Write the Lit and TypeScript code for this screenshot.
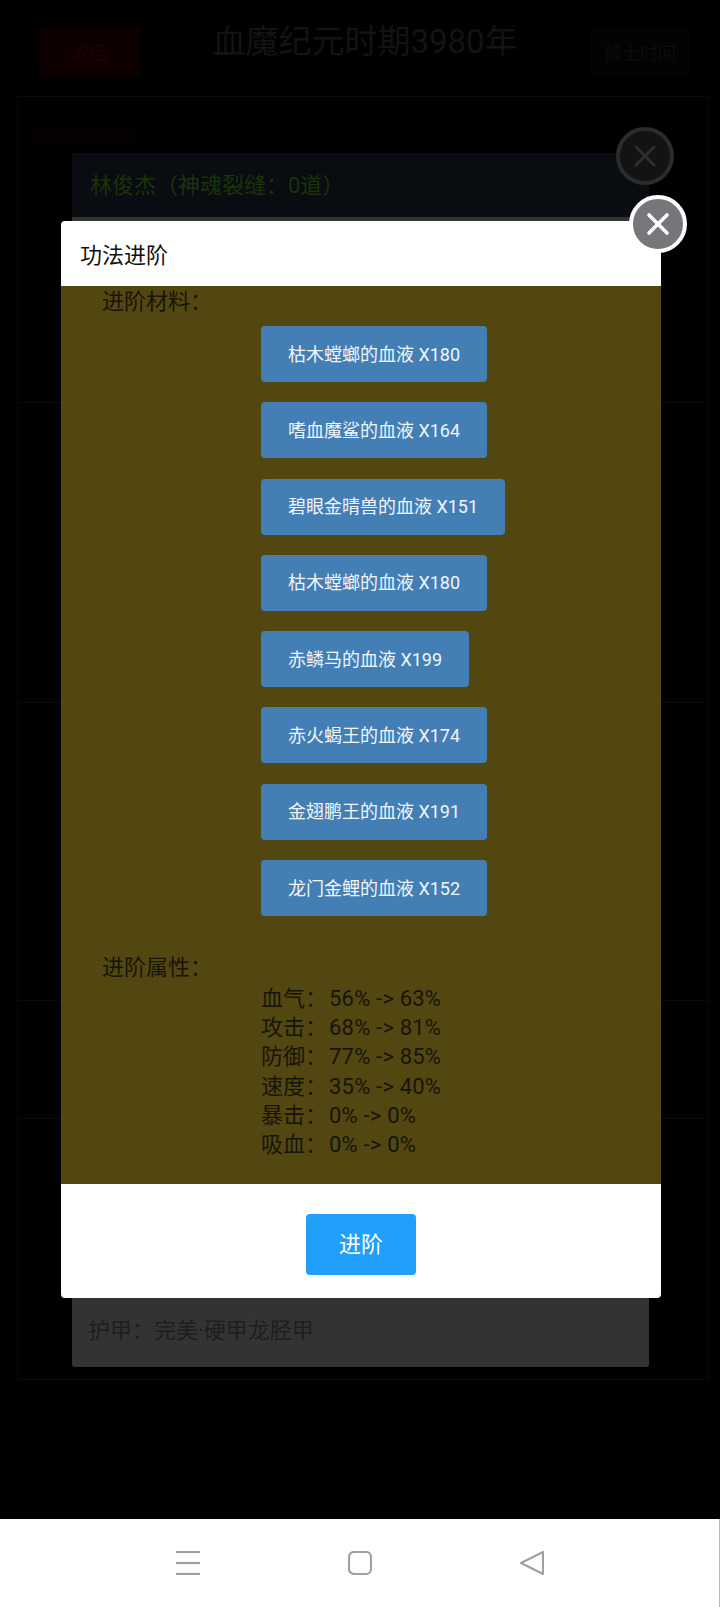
import { LitElement, html, css, svg } from "lit";
import { customElement } from "lit/decorators.js";

const FONT = css`"Roboto", "Noto Sans CJK SC", sans-serif`;

const materials = [
  "枯木螳螂的血液 X180",
  "嗜血魔鲨的血液 X164",
  "碧眼金晴兽的血液 X151",
  "枯木螳螂的血液 X180",
  "赤鳞马的血液 X199",
  "赤火蝎王的血液 X174",
  "金翅鹏王的血液 X191",
  "龙门金鲤的血液 X152",
];

const stats = [
  ["血气", "56% -> 63%"],
  ["攻击", "68% -> 81%"],
  ["防御", "77% -> 85%"],
  ["速度", "35% -> 40%"],
  ["暴击", "0% -> 0%"],
  ["吸血", "0% -> 0%"],
];

const closeIcon = svg`<line x1="-9" y1="-9" x2="9" y2="9"></line><line x1="9" y1="-9" x2="-9" y2="9"></line>`;

@customElement("app-root")
export class AppRoot extends LitElement {
  static styles = css`
    :host {
      display: flex;
      flex-direction: column;
      position: relative;
      width: 720px;
      height: 1607px;
      background: #000;
      overflow: hidden;
      font-family: ${FONT};
      font-size: 22px;
      color: #111;
    }
    .page { flex: 1; min-height: 0; display: flex; flex-direction: column; padding: 27px 30px 0 40px; }
    .top { display: flex; justify-content: space-between; align-items: flex-start; height: 69px; flex: none; }
    .top-btn { width: 100px; height: 50px; border-radius: 3px; display: flex; align-items: center; justify-content: center; font-size: 18px; }
    .top-btn.red { background: #0f0000; color: #1c0303; }
    .top-btn.dark { background: #030306; color: #0c0c0c; }
    .top-title { font-size: 33px; line-height: 30px; color: #131313; }
    .panel { margin: 0 -19px 0 -23px; height: 1284px; box-sizing: border-box; border: 1px solid #090909; display: flex; flex-direction: column; }
    .section { flex: none; box-sizing: border-box; border-bottom: 1px solid #0a0a0a; padding: 0 59px 0 54px; display: flex; flex-direction: column; }
    .s1 { height: 306px; padding-top: 30px; }
    .s2 { height: 300px; }
    .s3 { height: 298px; }
    .s4 { height: 118px; }
    .s5 { flex: 1; min-height: 0; border-bottom: 0; padding-bottom: 12px; }
    .hint { width: 100px; height: 16px; margin: 0 0 10px -39px; background: #060101; }
    .card { height: 64px; flex: none; box-sizing: border-box; padding: 0 18px 4px; display: flex; align-items: center; background: #090c11; color: #1a3309; }
    .fill { flex: 1; min-height: 0; }
    .fill-gray { background: #333; }
    .armor { flex: 1; min-height: 0; display: flex; align-items: flex-end; padding: 0 16px 23px; background: #333; color: #1e1e1e; border-radius: 0 0 3px 3px; line-height: 26px; margin-top: 20px; }
    .dim-close { position: absolute; left: 616px; top: 127px; width: 58px; height: 58px; }
    .dim-close circle { fill: #131313; stroke: #2c2c2c; stroke-width: 4; }
    .dim-close line { stroke: #2e2e2e; stroke-width: 3; stroke-linecap: round; }
    .modal { position: absolute; left: 61px; top: 221px; width: 600px; height: 1077px; background: #fff; border-radius: 4px; display: flex; flex-direction: column; }
    .modal-head { height: 65px; flex: none; box-sizing: border-box; padding: 0 0 2px 19px; display: flex; align-items: center; color: #111; border-radius: 4px 4px 0 0; }
    .modal-body { height: 898px; flex: none; background: #524710; padding: 0 41px; box-sizing: border-box; display: flex; flex-direction: column; color: #17150a; }
    .label { line-height: 32px; }
    .materials { display: flex; flex-direction: column; align-items: flex-start; gap: 20.3px; padding: 8px 0 0 159px; }
    .mat { height: 56px; box-sizing: border-box; padding: 0 26.5px 3px 27px; background: #437fb4; color: #f2f5f7; border-radius: 4px; display: flex; align-items: center; font-size: 18px; white-space: pre; }
    .attr-label { margin-top: 36px; }
    .attrs { padding: 0 0 0 159px; line-height: 29.2px; }
    .attr { display: flex; letter-spacing: 0.2px; }
    .attr-name { width: 68px; letter-spacing: 0; }
    .modal-foot { flex: 1; display: flex; justify-content: center; align-items: flex-start; padding-top: 30px; }
    .go { width: 110px; height: 61px; box-sizing: border-box; padding-bottom: 5px; background: #209ffb; color: #fff; border-radius: 4px; display: flex; align-items: center; justify-content: center; }
    .close { position: absolute; left: 628px; top: 194px; width: 60px; height: 60px; }
    .close circle { fill: #77777b; stroke: #fff; stroke-width: 4; }
    .close line { stroke: #fff; stroke-width: 3.6; stroke-linecap: round; }
    .nav { height: 88px; flex: none; background: #fff; display: flex; align-items: flex-start; justify-content: center; gap: 148px; padding: 32px 0 0; box-sizing: border-box; border-right: 1px solid #bbb; }
    .nav svg { width: 24px; height: 24px; fill: none; stroke: #a0a0a0; stroke-width: 2.2; stroke-linejoin: round; }
  `;

  render() {
    return html`
      <div class="page">
        <div class="top">
          <div class="top-btn red">返回</div>
          <div class="top-title">血魔纪元时期3980年</div>
          <div class="top-btn dark">修士时间</div>
        </div>
        <div class="panel">
          <div class="section s1">
            <div class="hint"></div>
            <div class="card">林俊杰（神魂裂缝：0道）</div>
            <div class="fill fill-gray"></div>
          </div>
          <div class="section s2"></div>
          <div class="section s3"></div>
          <div class="section s4"></div>
          <div class="section s5">
            <div class="armor">护甲：完美·硬甲龙胫甲</div>
          </div>
        </div>
      </div>
      <svg class="dim-close" viewBox="-29 -29 58 58">
        <circle r="27"></circle>${closeIcon}
      </svg>
      <div class="modal">
        <div class="modal-head">功法进阶</div>
        <div class="modal-body">
          <div class="label">进阶材料：</div>
          <div class="materials">
            ${materials.map((m) => html`<div class="mat">${m}</div>`)}
          </div>
          <div class="label attr-label">进阶属性：</div>
          <div class="attrs">
            ${stats.map(
              ([k, v]) => html`<div class="attr"><span class="attr-name">${k}：</span><span>${v}</span></div>`
            )}
          </div>
        </div>
        <div class="modal-foot"><div class="go">进阶</div></div>
      </div>
      <svg class="close" viewBox="-30 -30 60 60">
        <circle r="27"></circle>${closeIcon}
      </svg>
      <div class="nav">
        <svg viewBox="0 0 24 24">
          <line x1="0" y1="1" x2="24" y2="1"></line>
          <line x1="0" y1="12" x2="24" y2="12"></line>
          <line x1="0" y1="23" x2="24" y2="23"></line>
        </svg>
        <svg viewBox="0 0 24 24"><rect x="1" y="1" width="22" height="22" rx="5"></rect></svg>
        <svg viewBox="0 0 24 24"><path d="M23 1 L1 12 L23 23 Z"></path></svg>
      </div>
    `;
  }
}
